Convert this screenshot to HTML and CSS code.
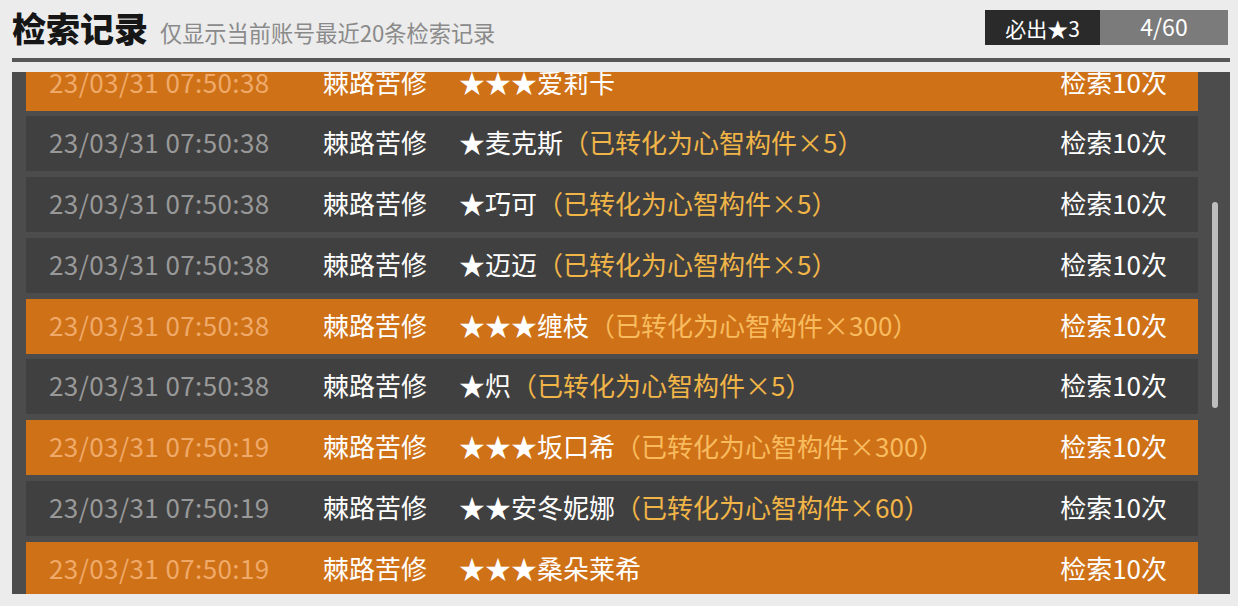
FILE: index.html
```html
<!DOCTYPE html>
<html lang="zh-CN">
<head>
<meta charset="utf-8">
<title>检索记录</title>
<link rel="stylesheet" href="styles.css">
</head>
<body>
<div class="page">
  <header class="header">
    <h1 class="title">检索记录</h1>
    <span class="subtitle">仅显示当前账号最近20条检索记录</span>
    <div class="badge">
      <span class="badge-dark">必出★3</span>
      <span class="badge-gray">4/60</span>
    </div>
  </header>
  <div class="rule"></div>
  <section class="panel">
    <div class="list">
      <div class="row hi"><span class="time">23/03/31 07:50:38</span><span class="name">棘路苦修</span><span class="item">★★★爱莉卡</span><span class="count">检索10次</span></div>
      <div class="row"><span class="time">23/03/31 07:50:38</span><span class="name">棘路苦修</span><span class="item">★麦克斯<span class="conv">（已转化为心智构件×5）</span></span><span class="count">检索10次</span></div>
      <div class="row"><span class="time">23/03/31 07:50:38</span><span class="name">棘路苦修</span><span class="item">★巧可<span class="conv">（已转化为心智构件×5）</span></span><span class="count">检索10次</span></div>
      <div class="row"><span class="time">23/03/31 07:50:38</span><span class="name">棘路苦修</span><span class="item">★迈迈<span class="conv">（已转化为心智构件×5）</span></span><span class="count">检索10次</span></div>
      <div class="row hi"><span class="time">23/03/31 07:50:38</span><span class="name">棘路苦修</span><span class="item">★★★缠枝<span class="conv">（已转化为心智构件×300）</span></span><span class="count">检索10次</span></div>
      <div class="row"><span class="time">23/03/31 07:50:38</span><span class="name">棘路苦修</span><span class="item">★炽<span class="conv">（已转化为心智构件×5）</span></span><span class="count">检索10次</span></div>
      <div class="row hi"><span class="time">23/03/31 07:50:19</span><span class="name">棘路苦修</span><span class="item">★★★坂口希<span class="conv">（已转化为心智构件×300）</span></span><span class="count">检索10次</span></div>
      <div class="row"><span class="time">23/03/31 07:50:19</span><span class="name">棘路苦修</span><span class="item">★★安冬妮娜<span class="conv">（已转化为心智构件×60）</span></span><span class="count">检索10次</span></div>
      <div class="row hi"><span class="time">23/03/31 07:50:19</span><span class="name">棘路苦修</span><span class="item">★★★桑朵莱希</span><span class="count">检索10次</span></div>
    </div>
    <div class="scrollbar"></div>
  </section>
</div>
</body>
</html>
```

FILE: styles.css
```css
html, body {
  margin: 0;
  padding: 0;
}

body {
  background: #ececec;
  font-family: "Noto Sans CJK SC", "Noto Sans", sans-serif;
  width: 1238px;
  height: 606px;
  overflow: hidden;
}

.page {
  padding: 10px 8px 0 12px;
}

.header {
  display: flex;
  align-items: center;
  height: 35px;
}

.title {
  margin: 0;
  font-size: 34px;
  font-weight: 900;
  color: #161616;
  line-height: 35px;
  letter-spacing: 0;
}

.subtitle {
  margin-left: 12px;
  margin-top: 8px;
  font-size: 22.2px;
  color: #8a8a8a;
  line-height: 30px;
}

.badge {
  margin-left: auto;
  margin-right: 2px;
  display: flex;
  height: 35px;
}

.badge-dark {
  width: 115px;
  background: #2a2a2a;
  color: #fff;
  font-size: 21px;
  display: flex;
  align-items: center;
  justify-content: center;
}

.badge-gray {
  width: 128px;
  background: #7b7b7b;
  color: #fff;
  font-size: 23px;
  display: flex;
  align-items: center;
  justify-content: center;
  padding-bottom: 3px;
  box-sizing: border-box;
}

.rule {
  height: 4px;
  margin-top: 13px;
  background: #575757;
}

.panel {
  position: relative;
  margin-top: 10px;
  height: 522px;
  background: #4c4c4c;
  overflow: hidden;
  padding: 0 32px 0 14px;
}

.list {
  margin-top: -16.5px;
  display: flex;
  flex-direction: column;
  gap: 5.75px;
}

.row {
  height: 55px;
  box-sizing: border-box;
  background: #404040;
  display: grid;
  grid-template-columns: 274px 136px 1fr auto;
  align-items: center;
  padding: 0 31px 4px 23px;
  font-size: 26px;
  color: #fff;
  white-space: nowrap;
}

.row.hi {
  background: #cf7117;
}

.time {
  color: #999999;
  letter-spacing: 0.4px;
}

.row.hi .time {
  color: #efaa6a;
}

.conv {
  color: #f1b447;
}

.row.hi .conv {
  color: #f8bb5e;
}

.count {
  text-align: right;
}

.scrollbar {
  position: absolute;
  right: 12px;
  top: 130px;
  width: 6px;
  height: 206px;
  border-radius: 3px;
  background: #bdbdbd;
}
```
